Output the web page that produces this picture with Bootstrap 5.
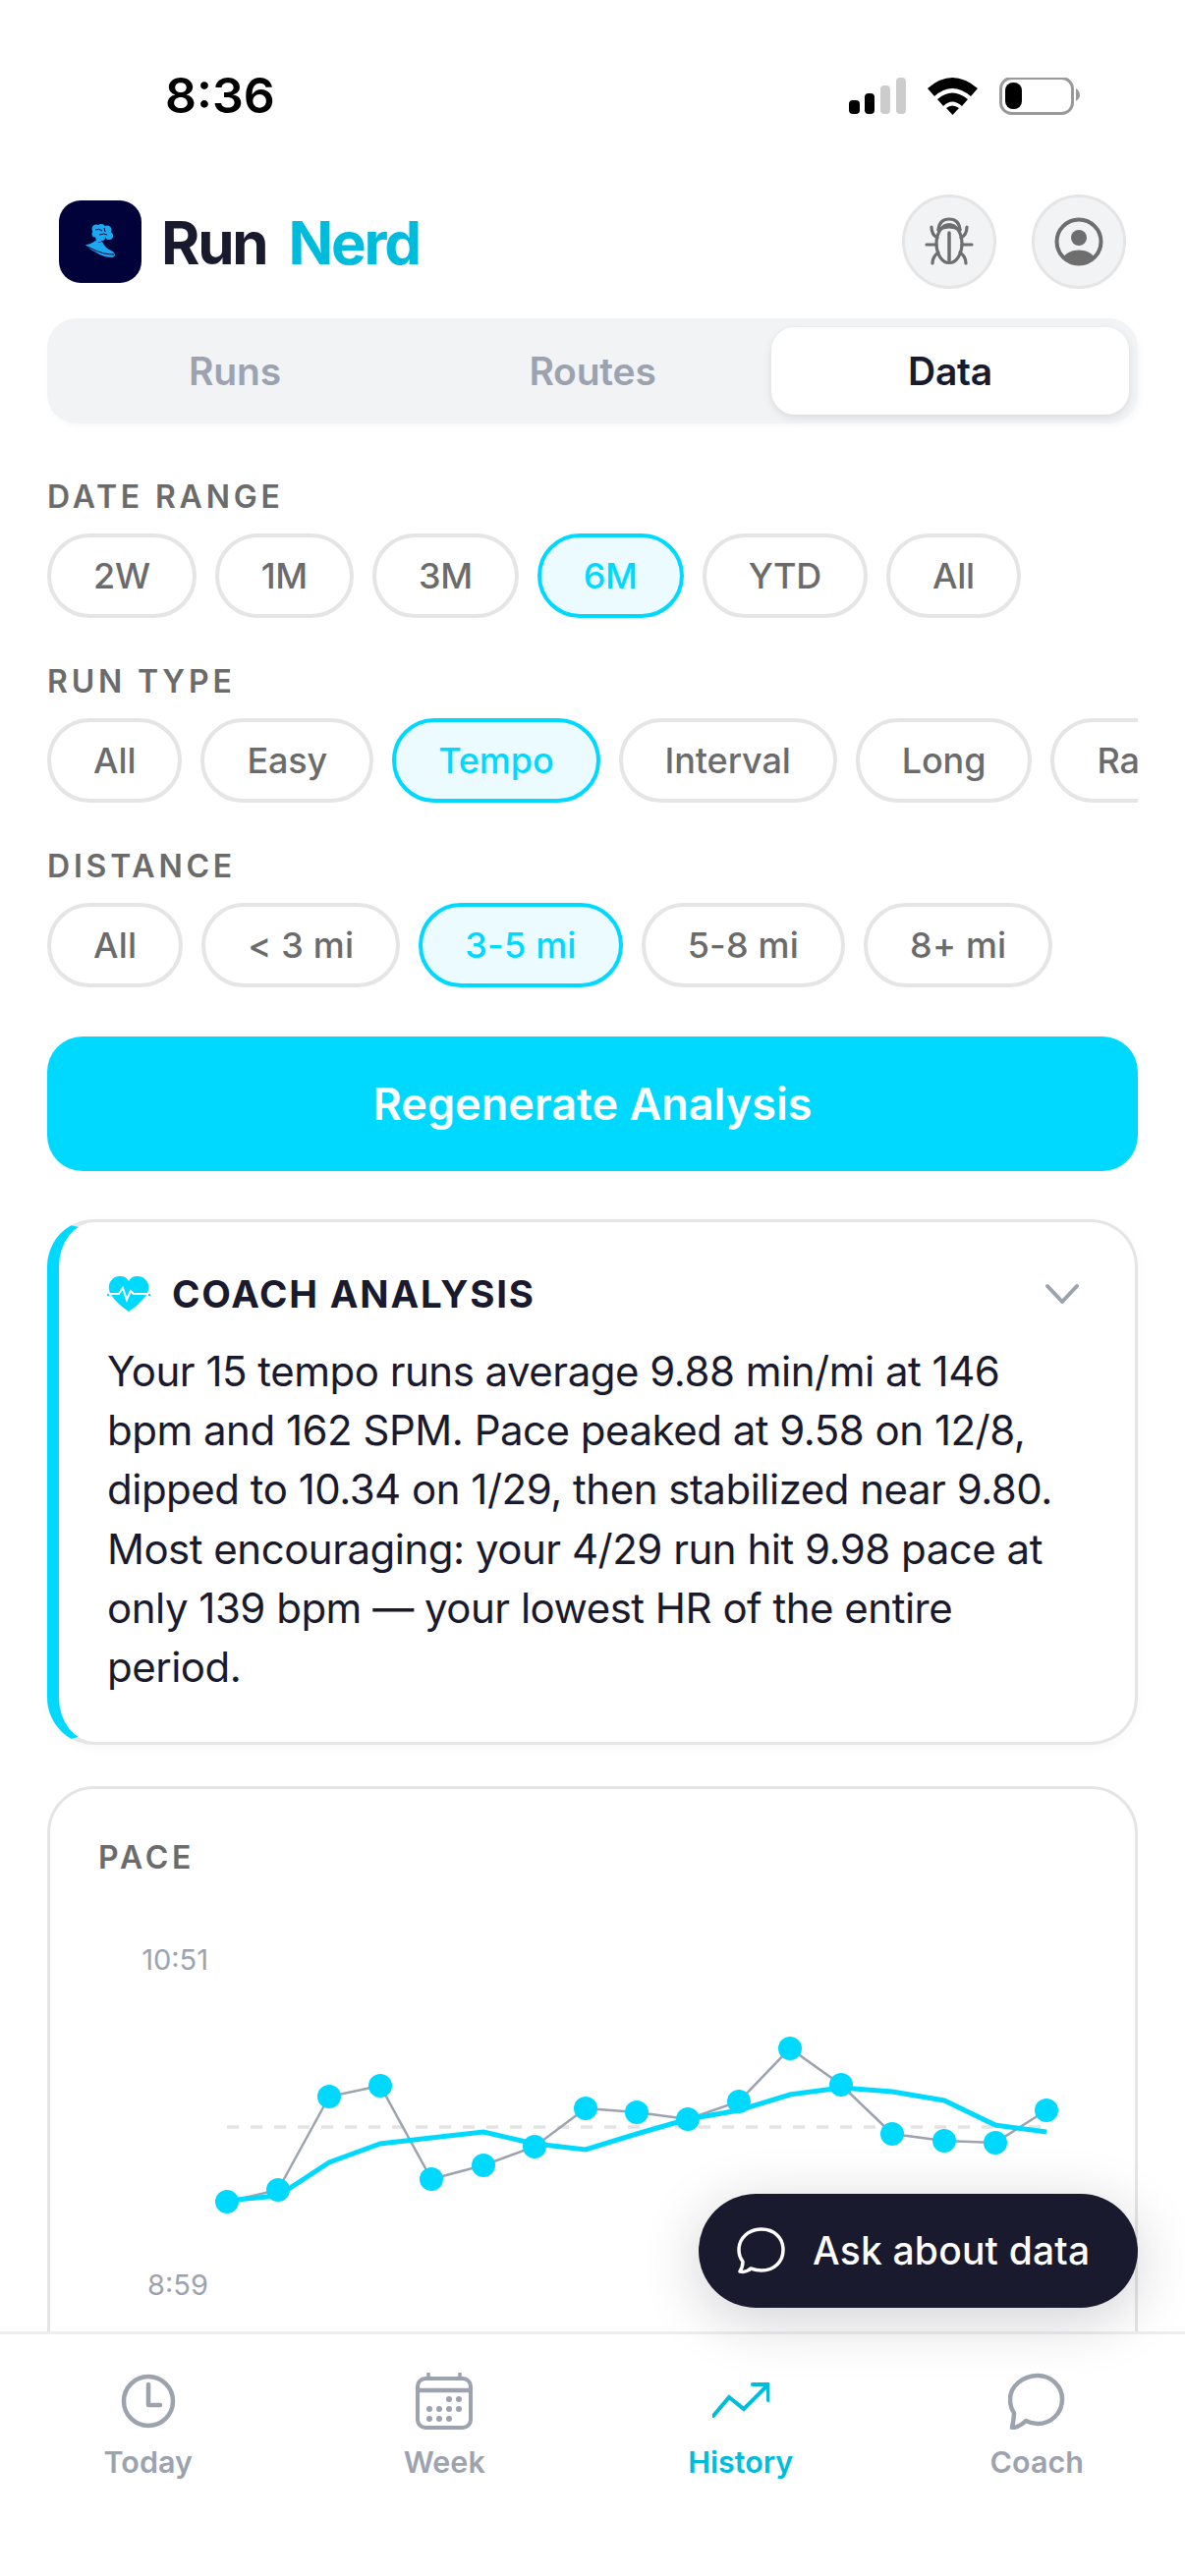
<!DOCTYPE html>
<html>
<head>
  <title>Run Nerd</title>
  <link href="https://cdn.jsdelivr.net/npm/bootstrap@5.3.0/dist/css/bootstrap.min.css" rel="stylesheet">
  <style>
    body { font-family: Inter, "Liberation Sans", sans-serif; background: #fff; color: #1a1a2e; }
    .phone { width: 1206px; height: 2622px; overflow: hidden; position: relative; }
    .status-row { height: 198px; padding: 79px 106px 0 168px; flex: none; }
    .clock-text { font-size: 50px; font-weight: 600; line-height: 36px; color: #000; }
    .scroll-area { min-height: 0; overflow: hidden; padding: 0 48px; }
    .top-row { height: 96px; padding-left: 12px; padding-right: 12px; }
    .top-actions { gap: 36px; }
    .logo-box { width: 84px; height: 84px; border-radius: 22px; background: #02023a; }
    .brand-text { font-size: 60px; font-weight: 700; letter-spacing: -2.2px; line-height: 84px; margin-left: 20px; padding-top: 2px; color: #1a1a2e; }
    .brand-text span { color: #00bcdc; margin-left: 10px; }
    .round-btn { width: 96px; height: 96px; border-radius: 50%; background: #f2f3f5; border: 3px solid #e5e5e5; }
    .seg-bar { height: 107px; margin-top: 30px; padding: 9px; background: #f2f3f5; border-radius: 30px; box-shadow: 2px 3px 6px rgba(0,0,0,.03); }
    .seg-btn { flex: 1; font-size: 39px; font-weight: 600; letter-spacing: -.2px; color: #9ca3af; border-radius: 24px; line-height: 89px; text-align: center; }
    .seg-btn.on { color: #1a1a2e; background: #fff; box-shadow: 0 3px 9px rgba(0,0,0,.1); }
    .field-label { font-size: 32px; font-weight: 600; letter-spacing: 3.8px; line-height: 36px; color: #6b6b6b; }
    .first-label { margin-top: 57px; }
    .next-label { margin-top: 47px; }
    .chip-row { margin-top: 19px; gap: 19px; overflow: hidden; }
    .chip-btn { height: 86px; padding: 0 43px; border: 4px solid #e5e5e5; border-radius: 43px; font-size: 36px; font-weight: 500; letter-spacing: -.3px; line-height: 75px; color: #6b6b6b; background: #fff; white-space: nowrap; flex: none; }
    .chip-btn.on { border-color: #00d9ff; background: #ebfbff; color: #00d9ff; }
    .type-row .chip-btn { letter-spacing: -.1px; }
    .dist-row .chip-btn { letter-spacing: .2px; }
    .regen-btn { height: 137px; margin-top: 50px; background: #00d9ff; border: 0; border-radius: 36px; color: #fff; font-size: 45px; font-weight: 600; display: block; }
    .coach-card { margin-top: 49px; border: 3px solid #e5e5e5; border-left: 12px solid #00d9ff; border-radius: 48px; padding: 50px 48px 46px 49px; box-shadow: 0 3px 12px rgba(0,0,0,.03); }
    .coach-title { font-size: 38.5px; font-weight: 700; letter-spacing: 1.8px; line-height: 46px; margin-left: 22px; }
    .coach-text { margin: 26px 0 0; font-size: 42px; letter-spacing: -.5px; line-height: 60.2px; color: #1a1a2e; }
    .pace-card { margin-top: 42px; border: 3px solid #e5e5e5; border-radius: 48px; padding: 52px 49px 0; }
    .chart-svg { display: block; flex: none; width: 1006px; height: 520px; }
    .chart-svg text { font-family: Inter, sans-serif; font-size: 29px; fill: #9ca3af; text-anchor: end; }
    .ask-btn { position: absolute; right: 48px; bottom: 273px; width: 447px; height: 116px; border-radius: 58px; border: 0; background: #1a1a2e; color: #fff; font-size: 39px; font-weight: 500; letter-spacing: .2px; padding-left: 39px; gap: 27px; box-shadow: 0 12px 60px rgba(26,26,46,.2); }
    .tab-bar { height: 249px; flex: none; border-top: 3px solid #eee; background: #fff; }
    .tab-item { flex: 1; padding-top: 39px; color: #9ca3af; font-size: 30.5px; font-weight: 600; line-height: 38px; }
    .tab-item svg { display: block; margin-bottom: 14px; }
    .tab-item.on { color: #00bcdc; }
  </style>
</head>
<body>
<div class="phone d-flex flex-column">

  <div class="status-row d-flex justify-content-between">
    <div class="clock-text">8:36</div>
    <svg width="236" height="38" viewBox="865 79 236 38">
      <rect x="865" y="102" width="11" height="14" rx="4" fill="#000"/>
      <rect x="881" y="95" width="10" height="21" rx="4" fill="#000"/>
      <rect x="897" y="87" width="10" height="29" rx="4" fill="#ccc"/>
      <rect x="913" y="79" width="10" height="37" rx="4" fill="#ccc"/>
      <path d="M945 90 Q970 68 996 90 L989 98 Q970 82 952 98Z" fill="#000"/>
      <path d="M955 101 Q970 88 986 101 L980 108 Q970 99 961 108Z" fill="#000"/>
      <path d="M964 110 Q970 105 977 110 L970.5 117Z" fill="#000"/>
      <rect x="1019.5" y="79.5" width="73" height="36" rx="11" fill="none" stroke="#999" stroke-width="3"/>
      <rect x="1024" y="84" width="17" height="27" rx="8" fill="#000"/>
      <path d="M1096 90 Q1100 93 1100 97 Q1100 100 1096 103Z" fill="#999"/>
    </svg>
  </div>

  <div class="scroll-area flex-grow-1">
    <div class="top-row d-flex align-items-center justify-content-between">
      <div class="d-flex align-items-center">
        <div class="logo-box d-flex align-items-center justify-content-center">
          <svg width="84" height="84" viewBox="0 0 84 84">
            <g fill="#1aa9f0">
              <circle cx="38" cy="29" r="4.5"/><circle cx="43" cy="28" r="4"/><circle cx="49" cy="30" r="4.5"/>
              <circle cx="37" cy="34" r="3.5"/><circle cx="44" cy="33" r="5"/><circle cx="51" cy="36" r="4"/>
              <circle cx="44" cy="38" r="3"/>
              <path d="M37 36 L44 36 L43 42 L38 43Z"/>
              <path d="M27 45 Q32 45 37 41 Q40 44 44 42 Q47 48 51 50 Q57 52 57 56 L55 58 Q45 58 38 53 Q31 50 27 45Z"/>
            </g>
            <path d="M37 30 Q41 28 44 31 M41 35 Q46 33 49 35 M46 28 L47 32" stroke="#02023a" stroke-width="1" fill="none"/>
            <path d="M29 47 Q38 52 46 54 Q52 55 56 55" stroke="#02023a" stroke-width="1" fill="none"/>
          </svg>
        </div>
        <div class="brand-text">Run<span> Nerd</span></div>
      </div>
      <div class="d-flex top-actions">
        <div class="round-btn d-flex align-items-center justify-content-center">
          <svg width="50" height="50" viewBox="0 0 50 50" fill="none" stroke="#6e6e6e" stroke-width="3.2" stroke-linecap="round">
            <ellipse cx="25" cy="27" rx="13" ry="19.5"/>
            <path d="M14 13 Q15 2 25 2 Q35 2 36 13"/>
            <path d="M14 13 Q25 7 36 13"/>
            <path d="M25 16V44" stroke-width="3.5"/>
            <path d="M2 28H12M38 28H48"/>
            <path d="M7 10 Q7 18 13 21M43 10 Q43 18 37 21"/>
            <path d="M8 47 Q8 40 14 36M42 47 Q42 40 36 36"/>
          </svg>
        </div>
        <div class="round-btn d-flex align-items-center justify-content-center">
          <svg width="50" height="50" viewBox="0 0 50 50">
            <defs><clipPath id="userClip"><circle cx="25" cy="25" r="22.5"/></clipPath></defs>
            <circle cx="25" cy="25" r="22.5" fill="none" stroke="#6e6e6e" stroke-width="4"/>
            <circle cx="25" cy="21" r="8" fill="#6e6e6e"/>
            <ellipse cx="25" cy="47.5" rx="18" ry="14" fill="#6e6e6e" clip-path="url(#userClip)"/>
          </svg>
        </div>
      </div>
    </div>

    <div class="seg-bar d-flex">
      <div class="seg-btn">Runs</div>
      <div class="seg-btn">Routes</div>
      <div class="seg-btn on">Data</div>
    </div>

    <div class="field-label first-label">DATE RANGE</div>
    <div class="chip-row d-flex">
      <button class="btn chip-btn">2W</button>
      <button class="btn chip-btn">1M</button>
      <button class="btn chip-btn">3M</button>
      <button class="btn chip-btn on">6M</button>
      <button class="btn chip-btn">YTD</button>
      <button class="btn chip-btn">All</button>
    </div>

    <div class="field-label next-label">RUN TYPE</div>
    <div class="chip-row type-row d-flex">
      <button class="btn chip-btn">All</button>
      <button class="btn chip-btn">Easy</button>
      <button class="btn chip-btn on">Tempo</button>
      <button class="btn chip-btn">Interval</button>
      <button class="btn chip-btn">Long</button>
      <button class="btn chip-btn">Race</button>
    </div>

    <div class="field-label next-label">DISTANCE</div>
    <div class="chip-row dist-row d-flex">
      <button class="btn chip-btn">All</button>
      <button class="btn chip-btn">&lt; 3 mi</button>
      <button class="btn chip-btn on">3-5 mi</button>
      <button class="btn chip-btn">5-8 mi</button>
      <button class="btn chip-btn">8+ mi</button>
    </div>

    <button class="btn regen-btn w-100">Regenerate Analysis</button>

    <div class="card coach-card">
      <div class="d-flex align-items-center">
        <svg width="44" height="38" viewBox="0 0 44 38">
          <path d="M22 37 Q10 29 4 20 Q0 13 3 7 Q7 0 14 1 Q19 1 22 6 Q25 1 30 1 Q37 0 41 7 Q44 13 40 20 Q34 29 22 37Z" fill="#00d9ff"/>
          <path d="M1 19H12L16 13L20 25L24 16L27 19H43" fill="none" stroke="#fff" stroke-width="2"/>
          <path d="M0 20H2M42 20H44" stroke="#00d9ff" stroke-width="2"/>
        </svg>
        <div class="coach-title">COACH ANALYSIS</div>
        <svg class="ms-auto me-2" width="36" height="24" viewBox="0 0 36 24" fill="none" stroke="#9ca3af" stroke-width="4" stroke-linecap="round" stroke-linejoin="round"><path d="M3 4L18 20L33 4"/></svg>
      </div>
      <p class="coach-text">Your 15 tempo runs average 9.88 min/mi at 146 bpm and 162 SPM. Pace peaked at 9.58 on 12/8, dipped to 10.34 on 1/29, then stabilized near 9.80. Most encouraging: your 4/29 run hit 9.98 pace at only 139 bpm — your lowest HR of the entire period.</p>
    </div>

    <div class="card pace-card">
      <div class="field-label">PACE</div>
      <svg class="chart-svg" viewBox="100 1909 1006 520">
        <text x="212" y="2005">10:51</text>
        <text x="212" y="2336">8:59</text>
        <line x1="231" y1="2165" x2="1060" y2="2165" stroke="#e3e3e3" stroke-width="3.5" stroke-dasharray="12 12"/>
        <polyline fill="none" stroke="#9ca3af" stroke-width="2.5" points="231,2241 283,2229 335,2134 387,2123 439,2218 492,2204 544,2185 596,2146 648,2150 700,2157 752,2139 804,2085 856,2122 908,2172 961,2179 1013,2181 1065,2148"/>
        <polyline fill="none" stroke="#00d9ff" stroke-width="5" points="231,2240 283,2235 335,2201 387,2182 439,2176 492,2170 544,2182 596,2188 648,2172 700,2157 752,2148 804,2132 856,2125 908,2129 961,2138 1013,2163 1065,2170"/>
        <g fill="#00d9ff">
          <circle cx="231" cy="2241" r="12"/><circle cx="283" cy="2229" r="12"/><circle cx="335" cy="2134" r="12"/><circle cx="387" cy="2123" r="12"/>
          <circle cx="439" cy="2218" r="12"/><circle cx="492" cy="2204" r="12"/><circle cx="544" cy="2185" r="12"/><circle cx="596" cy="2146" r="12"/>
          <circle cx="648" cy="2150" r="12"/><circle cx="700" cy="2157" r="12"/><circle cx="752" cy="2139" r="12"/><circle cx="804" cy="2085" r="12"/>
          <circle cx="856" cy="2122" r="12"/><circle cx="908" cy="2172" r="12"/><circle cx="961" cy="2179" r="12"/><circle cx="1013" cy="2181" r="12"/>
          <circle cx="1065" cy="2148" r="12"/>
        </g>
      </svg>
    </div>
  </div>

  <button class="btn ask-btn d-flex align-items-center">
    <svg width="50" height="50" viewBox="0 0 50 50" fill="none" stroke="#fff" stroke-width="3.5" stroke-linecap="round" stroke-linejoin="round"><path d="M25 3 C38 3 47 12 47 24 C47 36 38 45 25 45 C21 45 17 44 14 43 C11 46 7 47 3 46 C5 43 6 40 6 36 C3 32 2 28 2 24 C2 12 12 3 25 3Z"/></svg>
    <span>Ask about data</span>
  </button>

  <div class="tab-bar d-flex">
    <div class="tab-item d-flex flex-column align-items-center">
      <svg width="58" height="58" viewBox="0 0 58 58" fill="none" stroke="#9ca3af" stroke-width="4.5" stroke-linecap="round" stroke-linejoin="round"><circle cx="29" cy="29" r="25"/><path d="M29 12V33H41"/></svg>
      Today
    </div>
    <div class="tab-item d-flex flex-column align-items-center">
      <svg width="58" height="58" viewBox="0 0 58 58" fill="none" stroke="#9ca3af" stroke-width="3.5" stroke-linecap="round">
        <rect x="2" y="6" width="54" height="50" rx="8" stroke-width="4"/>
        <path d="M13 1V6M45 1V6"/>
        <path d="M2 18H56" stroke-width="4.5"/>
        <g fill="#9ca3af" stroke="none">
          <circle cx="34" cy="27" r="3"/><circle cx="44" cy="27" r="3"/>
          <circle cx="14" cy="37" r="3"/><circle cx="24" cy="37" r="3"/><circle cx="34" cy="37" r="3"/><circle cx="44" cy="37" r="3"/>
          <circle cx="14" cy="47" r="3"/><circle cx="24" cy="47" r="3"/><circle cx="34" cy="47" r="3"/>
        </g>
      </svg>
      Week
    </div>
    <div class="tab-item on d-flex flex-column align-items-center">
      <svg width="58" height="58" viewBox="0 0 58 58" fill="none" stroke="#00bcdc" stroke-width="4" stroke-linecap="round" stroke-linejoin="miter"><path d="M1 44L17 25L32 37L56 13M41 12H57V28"/></svg>
      History
    </div>
    <div class="tab-item d-flex flex-column align-items-center">
      <svg width="58" height="58" viewBox="0 0 58 58" fill="none" stroke="#9ca3af" stroke-width="4.5" stroke-linecap="round" stroke-linejoin="round"><path d="M30 3 C44 3 55 14 55 27 C55 41 44 52 30 52 C26 52 22 51 18 49 C14 53 8 56 4 56 C5 51 6 46 6 41 C3 37 2 32 2 27 C2 14 15 3 30 3Z"/></svg>
      Coach
    </div>
  </div>
</div>
<script src="https://cdn.jsdelivr.net/npm/bootstrap@5.3.0/dist/js/bootstrap.bundle.min.js"></script>
</body>
</html>
